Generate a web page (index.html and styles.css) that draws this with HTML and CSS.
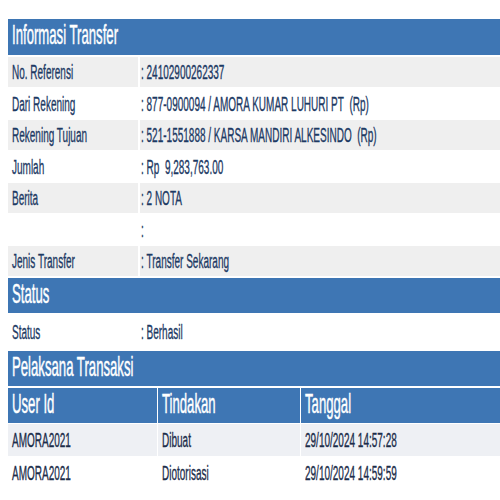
FILE: index.html
```html
<!DOCTYPE html>
<html>
<head>
<meta charset="utf-8">
<link rel="stylesheet" href="styles.css">
</head>
<body>
<div class="page">
  <div class="head"><span class="t th">Informasi Transfer</span></div>
  <div class="info">
    <div class="row gray"><div class="lab"><span class="t">No. Referensi</span></div><div class="val"><span class="t">:&nbsp;24102900262337</span></div></div>
    <div class="row"><div class="lab"><span class="t">Dari Rekening</span></div><div class="val"><span class="t">:&nbsp;877-0900094 / AMORA KUMAR LUHURI PT&nbsp; (Rp)</span></div></div>
    <div class="row gray"><div class="lab"><span class="t">Rekening Tujuan</span></div><div class="val"><span class="t">:&nbsp;521-1551888 / KARSA MANDIRI ALKESINDO&nbsp; (Rp)</span></div></div>
    <div class="row"><div class="lab"><span class="t">Jumlah</span></div><div class="val"><span class="t">:&nbsp;Rp&nbsp; 9,283,763.00</span></div></div>
    <div class="row gray"><div class="lab"><span class="t">Berita</span></div><div class="val"><span class="t">:&nbsp;2 NOTA</span></div></div>
    <div class="row"><div class="lab"></div><div class="val"><span class="t">:</span></div></div>
    <div class="row gray"><div class="lab"><span class="t">Jenis Transfer</span></div><div class="val"><span class="t">:&nbsp;Transfer Sekarang</span></div></div>
  </div>
  <div class="head head2"><span class="t th">Status</span></div>
  <div class="info">
    <div class="row tall"><div class="lab"><span class="t">Status</span></div><div class="val"><span class="t">:&nbsp;Berhasil</span></div></div>
  </div>
  <div class="head head2"><span class="t th">Pelaksana Transaksi</span></div>
  <div class="grid">
    <div class="gh"><span class="t th">User Id</span></div>
    <div class="gh"><span class="t th">Tindakan</span></div>
    <div class="gh"><span class="t th">Tanggal</span></div>
    <div class="gc alt"><span class="t td">AMORA2021</span></div>
    <div class="gc alt"><span class="t td">Dibuat</span></div>
    <div class="gc alt"><span class="t td">29/10/2024 14:57:28</span></div>
    <div class="gc"><span class="t td">AMORA2021</span></div>
    <div class="gc"><span class="t td">Diotorisasi</span></div>
    <div class="gc"><span class="t td">29/10/2024 14:59:59</span></div>
  </div>
</div>
</body>
</html>
```

FILE: styles.css
```css
html, body {
  margin: 0;
  padding: 0;
  background: #ffffff;
  overflow: hidden;
}
body {
  font-family: "Liberation Sans", Arial, sans-serif;
  color: #1d3a64;
}
.page {
  margin: 19px 0 0 8px;
  width: 492px;
  display: flex;
  flex-direction: column;
}
.t {
  display: inline-block;
  white-space: nowrap;
  transform: scaleX(0.5);
  transform-origin: 0 50%;
  font-size: 20px;
  line-height: 22px;
  -webkit-text-stroke: 0.35px currentColor;
}
.th {
  font-size: 28px;
  line-height: 30px;
  color: #ffffff;
  transform: scaleX(0.47);
  -webkit-text-stroke: 0.5px currentColor;
}
.td {
  color: #1c2d4a;
}
.head {
  height: 36px;
  background: #3e76b4;
  display: flex;
  align-items: center;
  padding-left: 4px;
  padding-bottom: 4px;
  box-sizing: border-box;
}
.head2 {
  height: 35px;
  margin-top: 2px;
}
.info {
  display: flex;
  flex-direction: column;
  gap: 1.5px;
  margin-top: 2px;
}
.row {
  display: grid;
  grid-template-columns: 130px minmax(0, 1fr);
  column-gap: 2px;
  height: 30px;
}
.row.tall {
  height: 34px;
}
.row.gray .lab, .row.gray .val {
  background: #efefef;
}
.lab, .val {
  display: flex;
  align-items: center;
  overflow: visible;
}
.lab {
  padding-left: 4px;
}
.val {
  padding-left: 1px;
}
.grid {
  margin-top: 2px;
  display: grid;
  grid-template-columns: 149px 142px minmax(0, 1fr);
  grid-template-rows: 35px 32px 32px;
  column-gap: 1px;
  row-gap: 1px;
}
.gh {
  background: #3e76b4;
  display: flex;
  align-items: center;
  padding-left: 4px;
  padding-bottom: 3px;
  box-sizing: border-box;
}
.gc {
  display: flex;
  align-items: center;
  padding-left: 4px;
}
.gc.alt {
  background: #eef0f4;
}
```
